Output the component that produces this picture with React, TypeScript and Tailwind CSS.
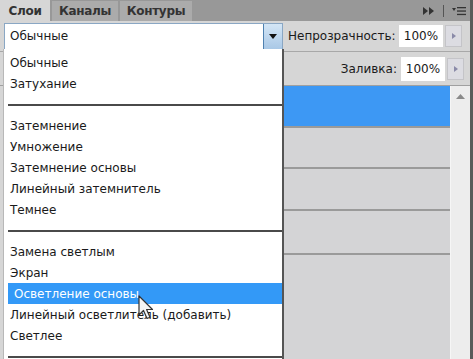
import React from "react";

const font = { fontFamily: '"DejaVu Sans", Verdana, sans-serif' };

function Item({ label, active }: { label: string; active?: boolean }) {
  return (
    <div
      className={
        "h-[21px] flex items-center pl-[6px] text-[12px] " +
        (active ? "bg-[#3399f7] text-white ml-[4px] pl-[2px]" : "text-[#1a1a1a]")
      }
    >
      {label}
    </div>
  );
}

function Sep() {
  return (
    <div className="h-[21px] flex items-center">
      <div className="h-[2px] w-full ml-[4px] bg-[#4a4a4a]" />
    </div>
  );
}

function ArrowBtn() {
  return (
    <div className="w-[17px] h-[22px] ml-[2px] bg-[#dcdce2] border border-[#c4c4c8] flex items-center justify-center">
      <svg width="4" height="6" viewBox="0 0 4 6">
        <path d="M0 0 L4 3 L0 6 Z" fill="#8a8aa8" />
      </svg>
    </div>
  );
}

export default function App() {
  return (
    <div className="w-[473px] h-[359px] relative overflow-hidden bg-[#d6d6d6]" style={font}>
      <div className="flex flex-col h-full border-r-[3px] border-[#5a5a5a]">
        {/* tab bar */}
        <div className="h-[21px] bg-[#989898] flex items-end shrink-0 relative">
          <div className="h-[21px] w-[50px] bg-[#d6d6d6] flex items-center justify-center text-[12px] font-bold text-[#333] tracking-[-0.3px]">
            Слои
          </div>
          <div className="h-[20px] w-[66px] ml-[2px] bg-[#ababab] flex items-center justify-center text-[12px] font-bold text-[#333] tracking-[-0.3px]">
            Каналы
          </div>
          <div className="h-[20px] w-[72px] ml-[2px] bg-[#ababab] flex items-center justify-center text-[12px] font-bold text-[#333] tracking-[-0.3px]">
            Контуры
          </div>
          <div className="flex-1" />
          <div className="h-[21px] flex items-center gap-[8px] pr-[4px]">
            <svg width="12" height="8" viewBox="0 0 12 8">
              <path d="M0 0 L5 4 L0 8 Z M6 0 L11 4 L6 8 Z" fill="#333" />
            </svg>
            <div className="w-px h-[12px] bg-[#555]" />
            <svg width="14" height="10" viewBox="0 0 14 10">
              <path d="M0 2 L4 2 L2 5 Z" fill="#333" />
              <rect x="5" y="1" width="9" height="1.3" fill="#333" />
              <rect x="5" y="4.4" width="9" height="1.3" fill="#333" />
              <rect x="5" y="7.8" width="9" height="1.3" fill="#333" />
            </svg>
          </div>
        </div>
        {/* blend/opacity row */}
        <div className="h-[31px] flex items-center shrink-0 pl-[4px] border-b border-[#a8a8a8]">
          <div className="w-[279px] h-[27px] bg-white border border-[#8aa7c4] flex items-center">
            <div className="flex-1 pl-[5px] text-[12px] text-[#1a1a1a]">Обычные</div>
            <div className="w-[19px] h-[25px] bg-gradient-to-b from-[#d4e6f6] to-[#a9c8e6] border-l border-[#4f81b0] flex items-center justify-center">
              <svg width="8" height="5" viewBox="0 0 8 5">
                <path d="M0 0 L8 0 L4 5 Z" fill="#111" />
              </svg>
            </div>
          </div>
          <div className="ml-[5px] text-[12px] text-[#1a1a1a] w-[111px] whitespace-nowrap">Непрозрачность:</div>
          <div className="w-[44px] h-[22px] bg-white flex items-center justify-center text-[12px] text-[#1a1a1a]">
            100%
          </div>
          <ArrowBtn />
        </div>
        {/* fill row */}
        <div className="h-[34px] flex items-center justify-end shrink-0 pr-[6px] border-b border-[#a0a0a0]">
          <div className="text-[12px] text-[#1a1a1a] mr-[4px]">Заливка:</div>
          <div className="w-[44px] h-[24px] bg-white flex items-center justify-center text-[12px] text-[#1a1a1a]">
            100%
          </div>
          <ArrowBtn />
        </div>
        {/* layers */}
        <div className="flex-1 flex pl-[4px]">
          <div className="flex-1 flex flex-col bg-[#d4d4d6]">
            <div className="h-[42px] bg-[#3d98f4] border-b-2 border-[#9a9a9a]" />
            <div className="h-[41px] border-b-2 border-[#9a9a9a]" />
            <div className="h-[42px] border-b-2 border-[#9a9a9a]" />
            <div className="h-[44px] border-b-2 border-[#9a9a9a]" />
          </div>
          <div className="w-[20px] bg-[#ededed] border-l border-[#f6f6f6] flex justify-center pt-[8px]">
            <svg width="9" height="5" viewBox="0 0 9 5">
              <path d="M0 5 L4.5 0 L9 5 Z" fill="#8a8a8a" />
            </svg>
          </div>
        </div>
      </div>

      {/* dropdown list */}
      <div className="absolute left-[3px] top-[49px] w-[281px] h-[320px] bg-white border-l border-[#b8b8b8] border-r-2 border-r-[#555] pt-[3px]">
        <Item label="Обычные" />
        <Item label="Затухание" />
        <Sep />
        <Item label="Затемнение" />
        <Item label="Умножение" />
        <Item label="Затемнение основы" />
        <Item label="Линейный затемнитель" />
        <Item label="Темнее" />
        <Sep />
        <Item label="Замена светлым" />
        <Item label="Экран" />
        <Item label="Осветление основы" active />
        <Item label="Линейный осветлитель (добавить)" />
        <Item label="Светлее" />
        <Sep />
      </div>

      {/* cursor */}
      <svg className="absolute left-[138px] top-[295px]" width="16" height="26" viewBox="0 0 16 26">
        <path d="M1 1 L1 20 L5.5 15.5 L9 23.5 L12 22.3 L8.6 14.5 L14.5 14.5 Z" fill="#f4f4f4" stroke="#333" strokeWidth="1.2" strokeLinejoin="round" />
      </svg>
    </div>
  );
}
